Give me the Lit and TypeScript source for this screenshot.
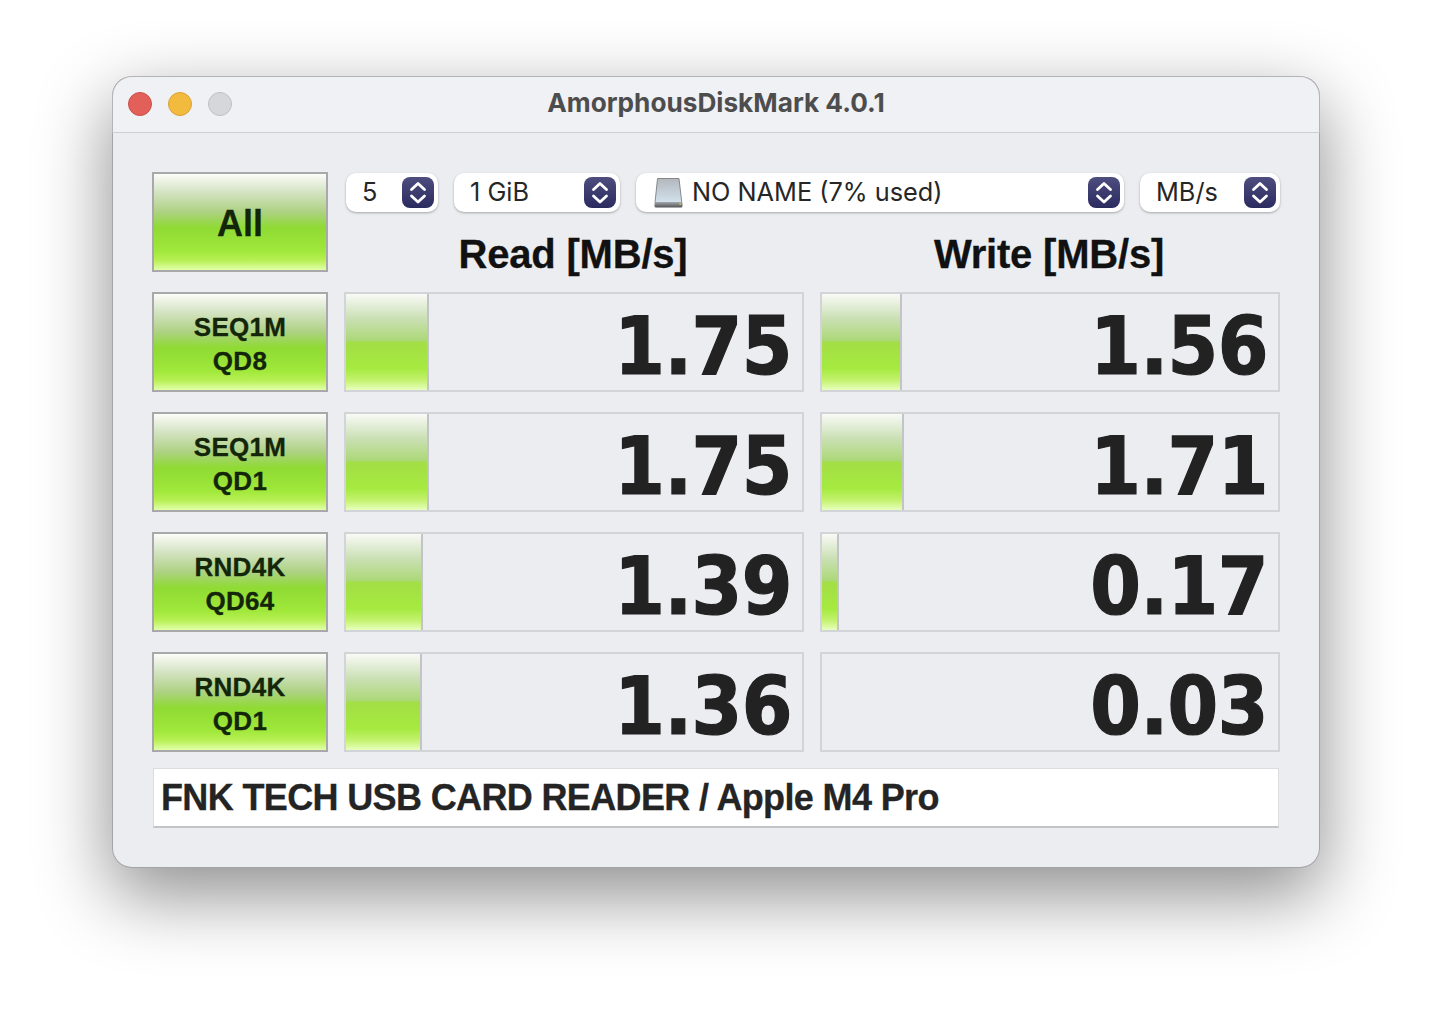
import { LitElement, html, css, svg } from "lit";
import { customElement } from "lit/decorators.js";

const rows = [
  { a: "SEQ1M", b: "QD8", r: "1.75", rw: 81, w: "1.56", ww: 78 },
  { a: "SEQ1M", b: "QD1", r: "1.75", rw: 81, w: "1.71", ww: 80 },
  { a: "RND4K", b: "QD64", r: "1.39", rw: 75, w: "0.17", ww: 15 },
  { a: "RND4K", b: "QD1", r: "1.36", rw: 74, w: "0.03", ww: 0 },
];

const stepper = html`<svg class="step" width="32" height="31" viewBox="0 0 32 31">
  <defs><linearGradient id="sg" x1="0" y1="0" x2="0" y2="1"><stop offset="0" stop-color="#4d4d7e"/><stop offset="1" stop-color="#2b2b60"/></linearGradient></defs>
  <rect width="32" height="31" rx="8" fill="url(#sg)"/>
  <path d="M9.500 12.500 16 6.500l6.500 6M9.500 19 16 25l6.500-6" fill="none" stroke="#fff" stroke-width="2.800" stroke-linecap="round" stroke-linejoin="round"/>
</svg>`;

const disk = svg`<svg class="disk" width="29" height="30" viewBox="0 0 29 30">
  <defs><linearGradient id="dg" x1="0" y1="0" x2="0" y2="1"><stop offset="0" stop-color="#b3b7bd"/><stop offset="1" stop-color="#d2e2ec"/></linearGradient>
  <linearGradient id="db" x1="0" y1="0" x2="0" y2="1"><stop offset="0" stop-color="#a5a8ac"/><stop offset="1" stop-color="#505255"/></linearGradient></defs>
  <path d="M3.500.500h21.500l2.800 24H1z" fill="url(#dg)" stroke="#6f7276" stroke-width=".8"/>
  <rect x=".5" y="24" width="28" height="5.500" rx="1.500" fill="url(#db)"/>
  <rect x="25.500" y="25.500" width="1.500" height="1.200" fill="#e3e06a"/>
</svg>`;

@customElement("app-root")
export class AppRoot extends LitElement {
  static styles = css`
    :host { display: block; width: 1432px; height: 1016px; background: #fff; overflow: hidden; padding: 76px 112px 0; box-sizing: border-box; font-family: Inter, "Liberation Sans", sans-serif; color: #242424; }
    .win { width: 1208px; height: 792px; box-sizing: border-box; background: #ecedf1; border-radius: 20px; box-shadow: 0 0 0 1px rgba(0,0,0,.3) inset, 0 26px 72px 2px rgba(0,0,0,.44); overflow: hidden; display: flex; flex-direction: column; }
    .title { height: 57px; flex: none; box-sizing: border-box; background: #f0f1f5; border: 1px solid #b4b4b6; border-bottom: 1px solid #cfcfd3; border-radius: 20px 20px 0 0; display: flex; align-items: center; padding: 0 0 2px 15px; gap: 16px; position: relative; }
    .dot { width: 24px; height: 24px; box-sizing: border-box; border-radius: 50%; border: 1px solid; }
    .red { background: #e35f5a; border-color: #c94f4a; }
    .yel { background: #f2bb3e; border-color: #d9a233; }
    .gry { background: #d6d7db; border-color: #bfc0c4; }
    .tt { position: absolute; left: 0; right: 0; top: 0; bottom: 4px; display: flex; align-items: center; justify-content: center; font-size: 26.200px; font-weight: 700; color: #4d4d4d; }
    .grid { display: grid; grid-template-columns: 176px 460px 460px; grid-auto-rows: 100px; column-gap: 16px; row-gap: 20px; padding: 39px 0 0 40px; }
    .btn { box-sizing: border-box; border: 2px solid #a9a9a9; padding-top: 3px; background: linear-gradient(#fbfcf8 0%, #d2e2c0 20%, #acd180 40%, #8fdb34 56%, #a0e83a 80%, #b8f055 90%, #e2ffaa 100%); display: flex; flex-direction: column; align-items: center; justify-content: center; font-family: "Liberation Sans", sans-serif; font-weight: 700; color: #14260a; font-size: 26px; line-height: 34px; letter-spacing: .3px; -webkit-text-stroke: .3px #14260a; }
    .btn.all { font-size: 36px; letter-spacing: 0; }
    .top { grid-column: 2 / 4; display: flex; flex-direction: column; }
    .sels { display: flex; gap: 16px; padding: 1px 0 0 2px; height: 39px; }
    .sel { box-sizing: border-box; height: 39px; background: #fff; border-radius: 10px; box-shadow: 0 1px 2.500px rgba(0,0,0,.3); display: flex; align-items: center; font-size: 25.300px; line-height: 34px; padding: 0 4px 0 16px; color: #262626; }
    .sel .t { flex: 1; white-space: nowrap; padding-bottom: 2px; }
    .step { flex: none; }
    .disk { flex: none; margin: 0 9px 0 2px; }
    .w92 { width: 92px; } .w166 { width: 166px; } .w488 { width: 488px; } .w140 { width: 140px; }
    .heads { display: grid; grid-template-columns: 460px 460px; column-gap: 16px; margin-top: 20px; font-family: "Liberation Sans", sans-serif; font-weight: 700; font-size: 40px; letter-spacing: -.2px; -webkit-text-stroke: .3px #111; line-height: 44px; text-align: center; color: #111; }
    .heads div { padding-right: 2px; }
    .cell { box-sizing: border-box; border: 2px solid #d3d4d8; position: relative; display: flex; align-items: stretch; justify-content: flex-end; }
    .bar { position: absolute; left: 0; top: 0; bottom: 0; border-right: 2px solid #c3c4c8; background: linear-gradient(#f9faf6 0%, #cbe0b6 25%, #abd875 49%, #a3de45 50%, #a6ea40 78%, #c4f270 90%, #e8ffbe 100%); }
    .num { position: relative; font-family: "DejaVu Sans Condensed", "DejaVu Sans", sans-serif; font-stretch: condensed; font-weight: 700; font-size: 81px; line-height: 100px; padding: 2px 10px 0 0; letter-spacing: -.5px; color: #222; -webkit-text-stroke: 1.200px #222; }
    .foot { grid-column: 1 / 4; height: 60px; margin: -4px 0 0 1px; width: 1126px; box-sizing: border-box; background: #fff; border: 1px solid #dcdde0; border-bottom: 2px solid #c3c4c6; padding-left: 7px; font-family: "Liberation Sans", sans-serif; font-weight: 700; font-size: 36px; letter-spacing: -0.640px; -webkit-text-stroke: .3px #242424; line-height: 58px; color: #242424; white-space: nowrap; }
  `;

  render() {
    return html`<div class="win">
      <div class="title">
        <div class="dot red"></div><div class="dot yel"></div><div class="dot gry"></div>
        <div class="tt">AmorphousDiskMark 4.0.1</div>
      </div>
      <div class="grid">
        <div class="btn all">All</div>
        <div class="top">
          <div class="sels">
            <div class="sel w92"><span class="t">5</span>${stepper}</div>
            <div class="sel w166"><span class="t">1 GiB</span>${stepper}</div>
            <div class="sel w488">${disk}<span class="t">NO NAME (7% used)</span>${stepper}</div>
            <div class="sel w140"><span class="t">MB/s</span>${stepper}</div>
          </div>
          <div class="heads"><div>Read [MB/s]</div><div>Write [MB/s]</div></div>
        </div>
        ${rows.map(
          (r) => html`
            <div class="btn"><div>${r.a}</div><div>${r.b}</div></div>
            <div class="cell"><div class="bar" style="width:${r.rw}px"></div><div class="num">${r.r}</div></div>
            <div class="cell">${r.ww ? html`<div class="bar" style="width:${r.ww}px"></div>` : ""}<div class="num">${r.w}</div></div>
          `
        )}
        <div class="foot">FNK TECH USB CARD READER / Apple M4 Pro</div>
      </div>
    </div>`;
  }
}
